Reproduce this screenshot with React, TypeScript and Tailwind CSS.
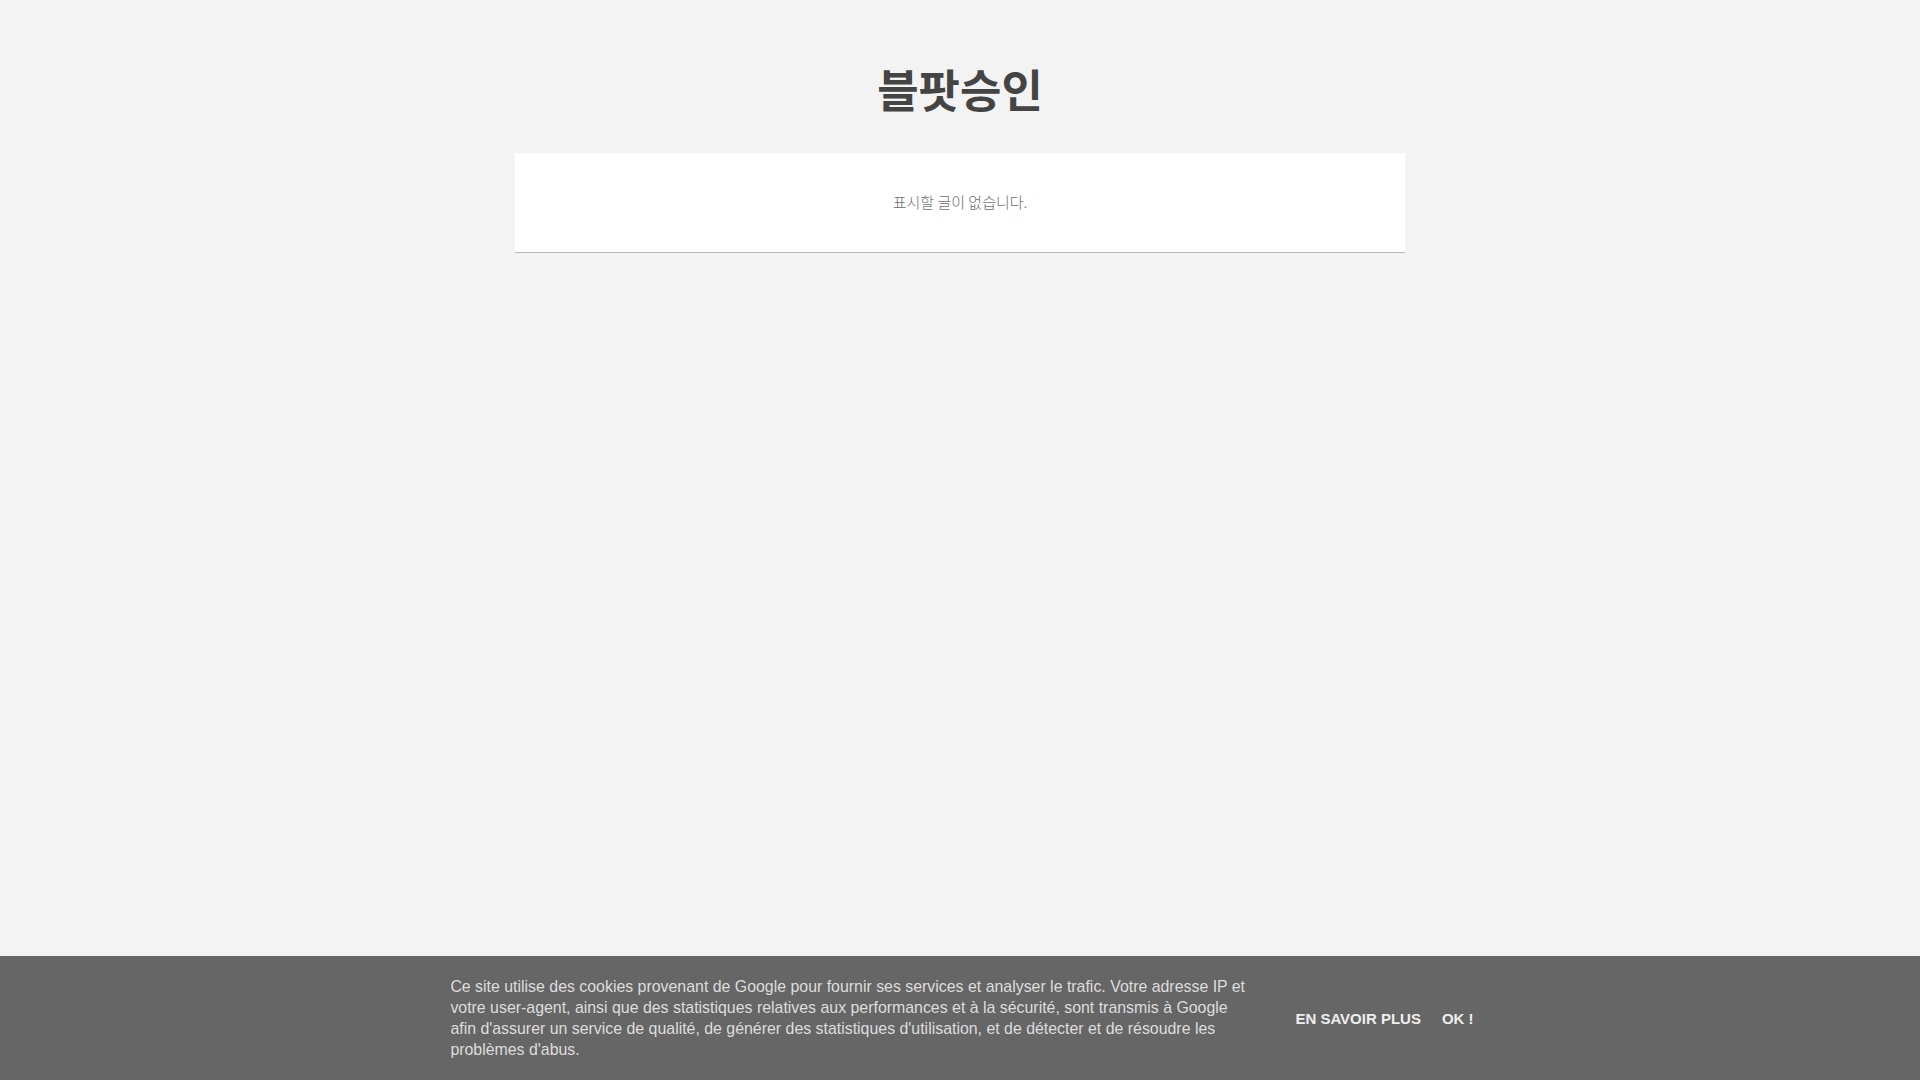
import React from 'react';

const CookieBar: React.FC = () => (
  <div className="fixed bottom-0 left-0 w-full h-[124px] pt-[2px] pl-[4px] bg-[#666666] flex items-center justify-center font-['Liberation_Sans',Arial,sans-serif]">
    <p className="w-[800px] text-left text-[15.9px] leading-[20.8px] text-[#dddddd]">
      Ce site utilise des cookies provenant de Google pour fournir ses services et analyser le trafic. Votre adresse IP et
      votre user-agent, ainsi que des statistiques relatives aux performances et à la sécurité, sont transmis à Google
      afin d'assurer un service de qualité, de générer des statistiques d'utilisation, et de détecter et de résoudre les
      problèmes d'abus.
    </p>
    <div className="flex items-center ml-[45px] mb-[1px] gap-[21px] text-[15px] font-bold text-[#eeeeee] uppercase">
      <a href="#" className="leading-none">En savoir plus</a>
      <a href="#" className="leading-none">OK !</a>
    </div>
  </div>
);

export default function App() {
  return (
    <div className="min-h-screen bg-[#f3f3f3] font-['Noto_Sans_CJK_KR','Noto_Sans',sans-serif]">
      <header className="pt-[61px] mb-[36px] text-center">
        <h1 className="text-[45px] leading-[56px] font-bold text-[#444444]">블팟승인</h1>
      </header>

      <main className="w-[890px] mx-auto">
        <div className="bg-white border-b border-[#b8b8b8] h-[100px] flex items-center justify-center">
          <p className="text-[15px] font-light text-[#6f6f6f]">표시할 글이 없습니다.</p>
        </div>
      </main>

      <CookieBar />
    </div>
  );
}
